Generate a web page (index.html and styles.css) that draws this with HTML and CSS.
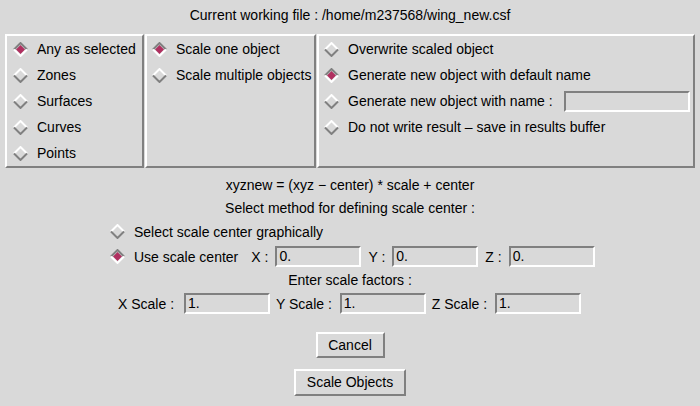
FILE: index.html
```html
<!DOCTYPE html>
<html>
<head>
<meta charset="utf-8">
<link rel="stylesheet" href="styles.css">
</head>
<body>
<div class="app">
  <div class="title">Current working file : /home/m237568/wing_new.csf</div>
  <div class="panels">
    <div class="panel p1">
      <div class="opt"><svg class="dia" viewBox="0 0 15 15"><polygon points="3,7.5 7.5,3 12,7.5 7.5,12" fill="#b03060"/><polyline points="1,7.5 7.5,1 14,7.5" fill="none" stroke="#808080" stroke-width="2"/><polyline points="1,7.5 7.5,14 14,7.5" fill="none" stroke="#fff" stroke-width="2"/></svg><span>Any as selected</span></div>
      <div class="opt"><svg class="dia" viewBox="0 0 15 15"><polyline points="1,7.5 7.5,1 14,7.5" fill="none" stroke="#fff" stroke-width="2"/><polyline points="1,7.5 7.5,14 14,7.5" fill="none" stroke="#808080" stroke-width="2"/></svg><span>Zones</span></div>
      <div class="opt"><svg class="dia" viewBox="0 0 15 15"><polyline points="1,7.5 7.5,1 14,7.5" fill="none" stroke="#fff" stroke-width="2"/><polyline points="1,7.5 7.5,14 14,7.5" fill="none" stroke="#808080" stroke-width="2"/></svg><span>Surfaces</span></div>
      <div class="opt"><svg class="dia" viewBox="0 0 15 15"><polyline points="1,7.5 7.5,1 14,7.5" fill="none" stroke="#fff" stroke-width="2"/><polyline points="1,7.5 7.5,14 14,7.5" fill="none" stroke="#808080" stroke-width="2"/></svg><span>Curves</span></div>
      <div class="opt"><svg class="dia" viewBox="0 0 15 15"><polyline points="1,7.5 7.5,1 14,7.5" fill="none" stroke="#fff" stroke-width="2"/><polyline points="1,7.5 7.5,14 14,7.5" fill="none" stroke="#808080" stroke-width="2"/></svg><span>Points</span></div>
    </div>
    <div class="panel p2">
      <div class="opt"><svg class="dia" viewBox="0 0 15 15"><polygon points="3,7.5 7.5,3 12,7.5 7.5,12" fill="#b03060"/><polyline points="1,7.5 7.5,1 14,7.5" fill="none" stroke="#808080" stroke-width="2"/><polyline points="1,7.5 7.5,14 14,7.5" fill="none" stroke="#fff" stroke-width="2"/></svg><span>Scale one object</span></div>
      <div class="opt"><svg class="dia" viewBox="0 0 15 15"><polyline points="1,7.5 7.5,1 14,7.5" fill="none" stroke="#fff" stroke-width="2"/><polyline points="1,7.5 7.5,14 14,7.5" fill="none" stroke="#808080" stroke-width="2"/></svg><span>Scale multiple objects</span></div>
    </div>
    <div class="panel p3">
      <div class="opt"><svg class="dia" viewBox="0 0 15 15"><polyline points="1,7.5 7.5,1 14,7.5" fill="none" stroke="#fff" stroke-width="2"/><polyline points="1,7.5 7.5,14 14,7.5" fill="none" stroke="#808080" stroke-width="2"/></svg><span>Overwrite scaled object</span></div>
      <div class="opt"><svg class="dia" viewBox="0 0 15 15"><polygon points="3,7.5 7.5,3 12,7.5 7.5,12" fill="#b03060"/><polyline points="1,7.5 7.5,1 14,7.5" fill="none" stroke="#808080" stroke-width="2"/><polyline points="1,7.5 7.5,14 14,7.5" fill="none" stroke="#fff" stroke-width="2"/></svg><span>Generate new object with default name</span></div>
      <div class="opt"><svg class="dia" viewBox="0 0 15 15"><polyline points="1,7.5 7.5,1 14,7.5" fill="none" stroke="#fff" stroke-width="2"/><polyline points="1,7.5 7.5,14 14,7.5" fill="none" stroke="#808080" stroke-width="2"/></svg><span>Generate new object with name :</span><div class="field name-field"></div></div>
      <div class="opt"><svg class="dia" viewBox="0 0 15 15"><polyline points="1,7.5 7.5,1 14,7.5" fill="none" stroke="#fff" stroke-width="2"/><polyline points="1,7.5 7.5,14 14,7.5" fill="none" stroke="#808080" stroke-width="2"/></svg><span>Do not write result &#8211; save in results buffer</span></div>
    </div>
  </div>

  <div class="line formula">xyznew = (xyz &#8722; center) * scale + center</div>
  <div class="line method">Select method for defining scale center :</div>

  <div class="center-block">
    <div class="opt crow"><svg class="dia" viewBox="0 0 15 15"><polyline points="1,7.5 7.5,1 14,7.5" fill="none" stroke="#fff" stroke-width="2"/><polyline points="1,7.5 7.5,14 14,7.5" fill="none" stroke="#808080" stroke-width="2"/></svg><span>Select scale center graphically</span></div>
    <div class="opt crow use"><svg class="dia" viewBox="0 0 15 15"><polygon points="3,7.5 7.5,3 12,7.5 7.5,12" fill="#b03060"/><polyline points="1,7.5 7.5,1 14,7.5" fill="none" stroke="#808080" stroke-width="2"/><polyline points="1,7.5 7.5,14 14,7.5" fill="none" stroke="#fff" stroke-width="2"/></svg><span>Use scale center</span>
      <span class="lbl lx">X :</span><div class="field cfield">0.</div>
      <span class="lbl">Y :</span><div class="field cfield">0.</div>
      <span class="lbl">Z :</span><div class="field cfield">0.</div>
    </div>
  </div>

  <div class="line enter">Enter scale factors :</div>
  <div class="scale-row">
    <span class="slbl sx">X Scale :</span><div class="field sfield">1.</div>
    <span class="slbl">Y Scale :</span><div class="field sfield">1.</div>
    <span class="slbl">Z Scale :</span><div class="field sfield">1.</div>
  </div>

  <div class="buttons">
    <div class="btn cancel">Cancel</div>
    <div class="btn go">Scale Objects</div>
  </div>
</div>
</body>
</html>
```

FILE: styles.css
```css
html, body {
  margin: 0;
  padding: 0;
  background: #d9d9d9;
}
body {
  font-family: "Liberation Sans", Arial, Helvetica, sans-serif;
  font-size: 14px;
  color: #000;
}
.app {
  width: 700px;
  height: 406px;
  overflow: hidden;
}
.title {
  height: 34px;
  line-height: 30px;
  text-align: center;
}
.panels {
  display: flex;
  padding-left: 5px;
  gap: 1px;
}
.panel {
  box-sizing: border-box;
  height: 134px;
  border-top: 2px solid #fff;
  border-left: 2px solid #fff;
  border-bottom: 2px solid #808080;
  border-right: 2px solid #808080;
  padding-top: 0;
  padding-left: 6px;
}
.p1 { width: 139px; }
.p2 { width: 171px; padding-left: 5px; }
.p3 { width: 378px; padding-left: 5px; }
.opt {
  display: flex;
  align-items: center;
  height: 26px;
  white-space: nowrap;
}
.dia {
  width: 15px;
  height: 15px;
  flex: none;
  margin-right: 9px;
}
.field {
  box-sizing: border-box;
  height: 21px;
  border-top: 2px solid #808080;
  border-left: 2px solid #808080;
  border-bottom: 2px solid #fff;
  border-right: 2px solid #fff;
  padding-left: 2px;
  line-height: 17px;
  background: #d9d9d9;
}
.name-field {
  width: 126px;
  margin-left: 11px;
}
.line {
  text-align: center;
  height: 23px;
  line-height: 23px;
}
.formula { margin-top: 6px; }
.center-block {
  padding-left: 110px;
}
.crow { height: 23px; }
.crow.use { height: 27px; }
.lbl {
  margin-left: 7px;
  margin-right: 7px;
}
.lbl.lx { margin-left: 13px; }
.cfield { width: 86px; }
.enter { height: 21px; line-height: 21px; }
.scale-row {
  display: flex;
  align-items: center;
  height: 25px;
  padding-left: 118px;
}
.slbl {
  margin-right: 8px;
}
.slbl.sx { margin-right: 10px; }
.sfield {
  width: 86px;
  margin-right: 6px;
}
.buttons {
  display: flex;
  flex-direction: column;
  align-items: center;
  padding-top: 16px;
  gap: 11px;
}
.btn {
  box-sizing: border-box;
  height: 26px;
  line-height: 22px;
  text-align: center;
  border-top: 2px solid #fff;
  border-left: 2px solid #fff;
  border-bottom: 2px solid #808080;
  border-right: 2px solid #808080;
}
.cancel { width: 69px; }
.go { width: 112px; height: 27px; line-height: 23px; }
```
